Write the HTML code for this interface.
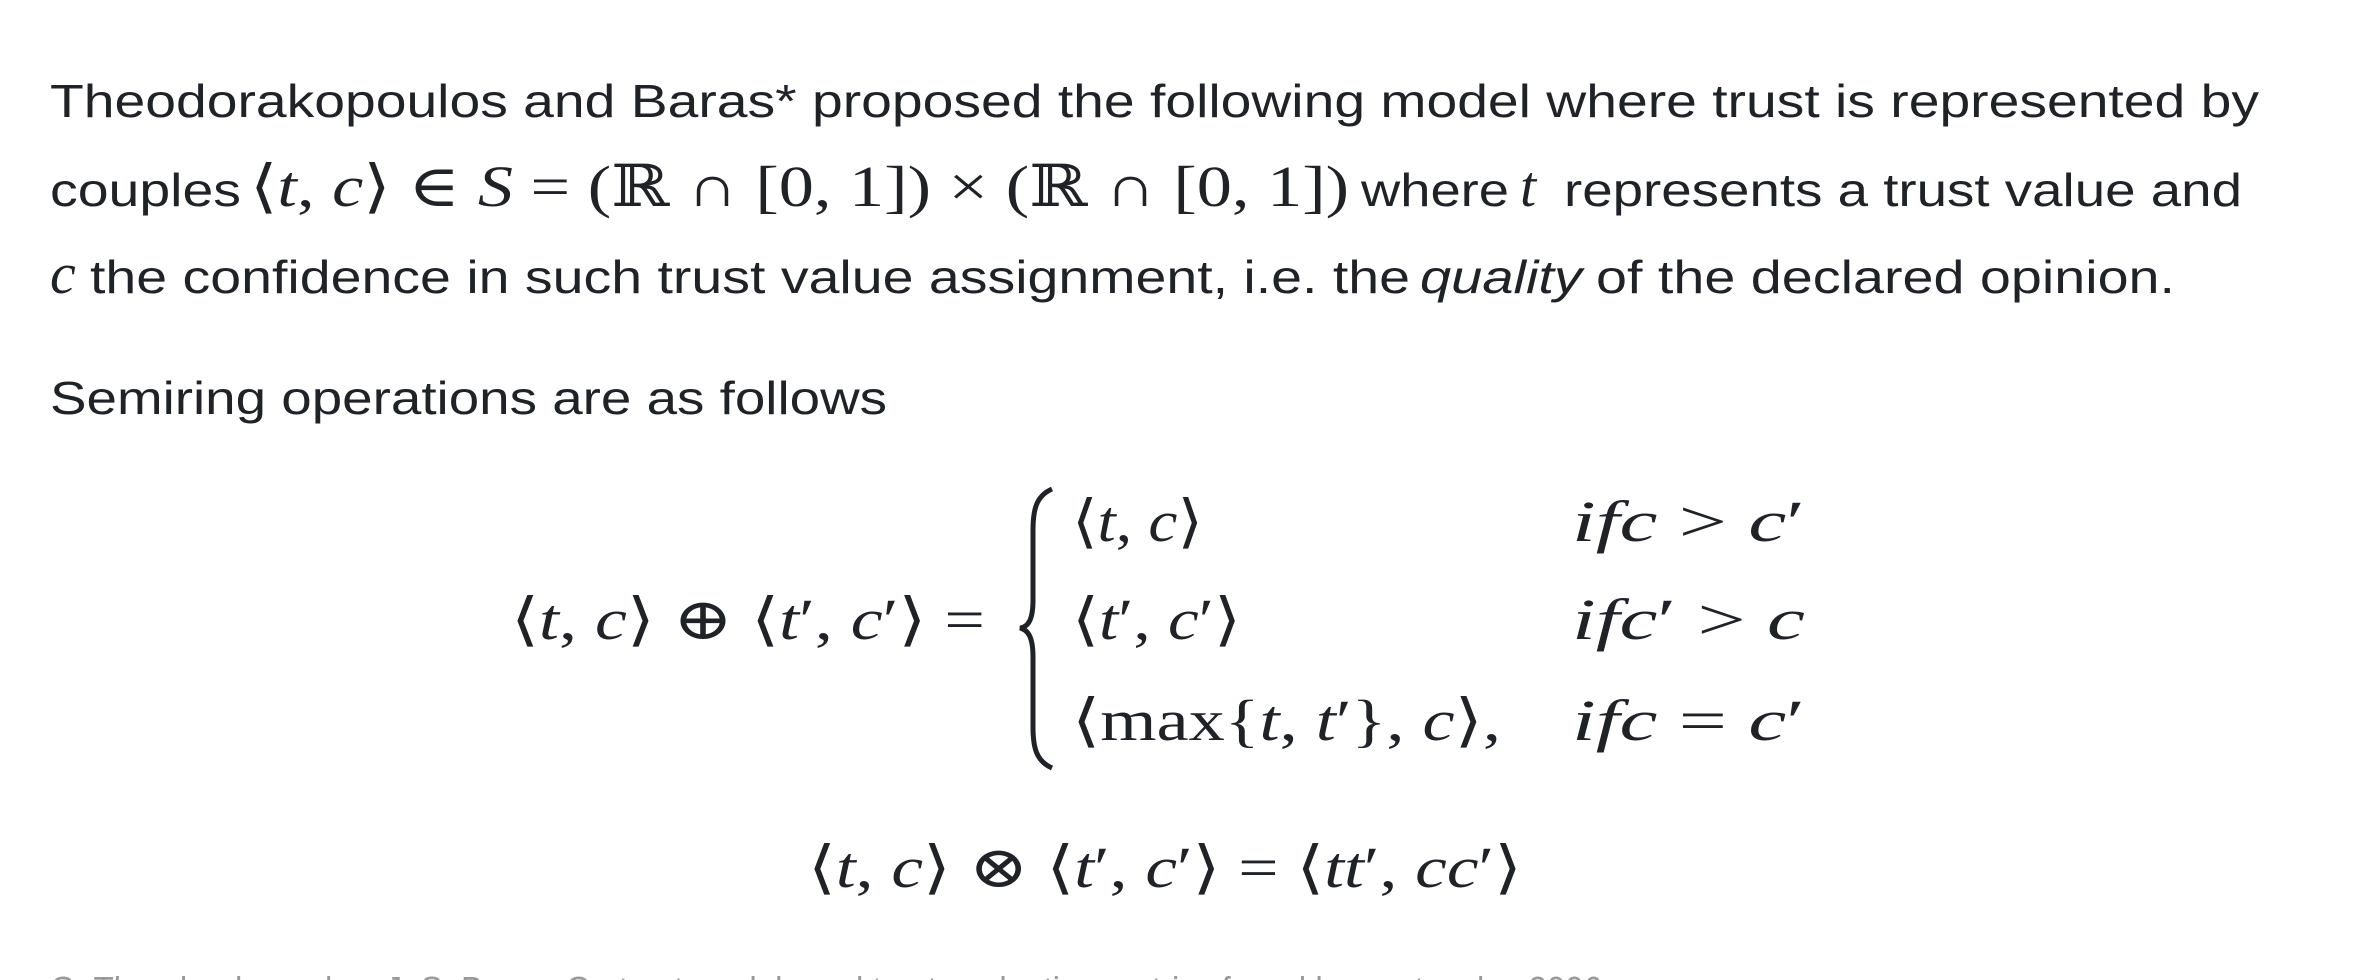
<!DOCTYPE html>
<html><head><meta charset="utf-8"><style>
html,body{margin:0;padding:0;background:#fff;width:2358px;height:980px;overflow:hidden}
svg{display:block}
.t{font-family:"Liberation Sans",sans-serif;font-size:46px;fill:#1f2328}
.m{font-family:"Liberation Serif","DejaVu Serif",serif;font-size:58px;fill:#1f2328}
.i{font-style:italic}
</style></head><body>
<svg width="2358" height="980" viewBox="0 0 2358 980" xmlns="http://www.w3.org/2000/svg">
<text class="t" x="50" y="117" textLength="2209" lengthAdjust="spacingAndGlyphs">Theodorakopoulos and Baras* proposed the following model where trust is represented by</text>
<text class="t" x="50" y="206" textLength="191" lengthAdjust="spacingAndGlyphs">couples</text>
<text class="m" x="250" y="206" textLength="1099" lengthAdjust="spacingAndGlyphs">⟨<tspan class="i">t</tspan>, <tspan class="i">c</tspan>⟩ ∈ <tspan class="i">S</tspan> = (ℝ ∩ [0, 1]) × (ℝ ∩ [0, 1])</text>
<text class="t" x="1361" y="206" textLength="148" lengthAdjust="spacingAndGlyphs">where</text>
<text class="m i" x="1520" y="206">t</text>
<text class="t" x="1564" y="206" textLength="678" lengthAdjust="spacingAndGlyphs">represents a trust value and</text>
<text class="m i" x="50" y="293">c</text>
<text class="t" x="90" y="293" textLength="1320" lengthAdjust="spacingAndGlyphs">the confidence in such trust value assignment, i.e. the</text>
<text class="t i" x="1420" y="293" textLength="162" lengthAdjust="spacingAndGlyphs">quality</text>
<text class="t" x="1596" y="293" textLength="579" lengthAdjust="spacingAndGlyphs">of the declared opinion.</text>
<text class="t" x="50" y="414" textLength="837" lengthAdjust="spacingAndGlyphs">Semiring operations are as follows</text>

<text class="m" x="511" y="639" textLength="474" lengthAdjust="spacingAndGlyphs">⟨<tspan class="i">t</tspan>, <tspan class="i">c</tspan>⟩ ⊕ ⟨<tspan class="i">t</tspan>′, <tspan class="i">c</tspan>′⟩ =</text>
<path d="M1052 489 C1036 496 1033 510 1033 530 L1033 600 C1033 618 1029 627 1020 628 C1029 630 1033 639 1033 657 L1033 727 C1033 747 1036 761 1052 768" fill="none" stroke="#1f2328" stroke-width="5"/>
<text class="m" x="1072" y="541" textLength="131" lengthAdjust="spacingAndGlyphs">⟨<tspan class="i">t</tspan>, <tspan class="i">c</tspan>⟩</text>
<text class="m" x="1072" y="639" textLength="169" lengthAdjust="spacingAndGlyphs">⟨<tspan class="i">t</tspan>′, <tspan class="i">c</tspan>′⟩</text>
<text class="m" x="1072" y="740" textLength="429" lengthAdjust="spacingAndGlyphs">⟨max{<tspan class="i">t</tspan>, <tspan class="i">t</tspan>′}, <tspan class="i">c</tspan>⟩,</text>
<text class="m" x="1572" y="541" textLength="233" lengthAdjust="spacingAndGlyphs"><tspan class="i">ifc</tspan> &gt; <tspan class="i">c</tspan>′</text>
<text class="m" x="1572" y="639" textLength="233" lengthAdjust="spacingAndGlyphs"><tspan class="i">ifc</tspan>′ &gt; <tspan class="i">c</tspan></text>
<text class="m" x="1572" y="740" textLength="233" lengthAdjust="spacingAndGlyphs"><tspan class="i">ifc</tspan> = <tspan class="i">c</tspan>′</text>

<text class="m" x="808" y="887" textLength="714" lengthAdjust="spacingAndGlyphs">⟨<tspan class="i">t</tspan>, <tspan class="i">c</tspan>⟩ ⊗ ⟨<tspan class="i">t</tspan>′, <tspan class="i">c</tspan>′⟩ = ⟨<tspan class="i">tt</tspan>′, <tspan class="i">cc</tspan>′⟩</text>

<text x="50" y="1002" font-family="Liberation Sans, sans-serif" font-size="36" fill="#999" textLength="1552" lengthAdjust="spacingAndGlyphs">G. Theodorakopoulos, J. S. Baras, On trust models and trust evaluation metrics for ad hoc networks, 2006</text>
</svg>
</body></html>
